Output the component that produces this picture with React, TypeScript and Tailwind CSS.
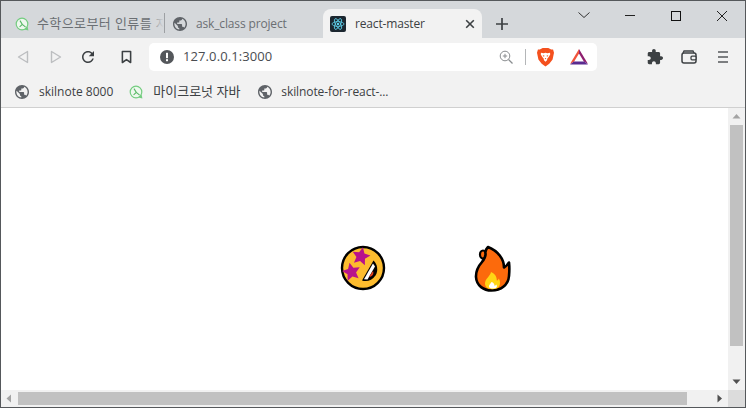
import React from "react";

const Globe = ({ className = "" }: { className?: string }) => (
  <svg viewBox="2 2 20 20" width={14} height={14} className={`shrink-0 ${className}`}>
    <path fill="#5f6368" d="M12 2C6.48 2 2 6.48 2 12s4.48 10 10 10 10-4.48 10-10S17.52 2 12 2zm-1 17.93c-3.95-.49-7-3.85-7-7.93 0-.62.08-1.21.21-1.79L9 15v1c0 1.1.9 2 2 2v1.93zm6.9-2.54c-.26-.81-1-1.39-1.9-1.39h-1v-3c0-.55-.45-1-1-1H8v-2h2c.55 0 1-.45 1-1V7h2c1.1 0 2-.9 2-2v-.41c2.93 1.19 5 4.06 5 7.41 0 2.08-.8 3.97-2.1 5.39z" />
  </svg>
);

const GreenIcon = () => (
  <svg viewBox="0 0 14 14" width={14} height={14} className="shrink-0">
    <circle cx="7" cy="7" r="5.8" fill="#eef8ee" stroke="#74cd80" strokeWidth="1.2" />
    <path d="M5 3.6 L7.3 7.4 L4.6 9.8 M7.3 7.4 L10.6 10.2" fill="none" stroke="#58b866" strokeWidth="1.1" />
    <path d="M9.5 12.6 L13.4 13.4 L12.6 9.6 Z" fill="#74cd80" />
  </svg>
);

const ReactIcon = () => (
  <svg viewBox="0 0 16 16" width={16} height={16} className="shrink-0">
    <rect width="16" height="16" rx="2" fill="#1c2730" />
    <g fill="none" stroke="#5fd4f0" strokeWidth="0.8">
      <ellipse cx="8" cy="8" rx="6" ry="2.4" />
      <ellipse cx="8" cy="8" rx="6" ry="2.4" transform="rotate(60 8 8)" />
      <ellipse cx="8" cy="8" rx="6" ry="2.4" transform="rotate(120 8 8)" />
    </g>
    <circle cx="8" cy="8" r="1.2" fill="#5fd4f0" />
  </svg>
);

const Brave = () => (
  <svg viewBox="0 0 18 20" width={17} height={19} className="shrink-0">
    <path fill="#f4501e" d="M3 1.5 L6 0 H12 L15 1.5 L17 1.5 L18 5 L16.5 12 L13 16.5 L9 19.5 L5 16.5 L1.5 12 L0 5 L1 1.5 Z" />
    <path fill="#fff" d="M4.2 5 L7 5.6 L9 5 L11 5.6 L13.8 5 L14 6.8 L12 10 L11 11 L10.6 13 L9 14.6 L7.4 13 L7 11 L6 10 L4 6.8 Z" />
    <path fill="#f4501e" d="M6 7.4 L8 8.2 L7.2 9.4 Z M12 7.4 L10 8.2 L10.8 9.4 Z M8.2 10.6 H9.8 L9 12 Z" />
  </svg>
);

const Bat = () => (
  <svg viewBox="0 0 18 16" width={18} height={16} className="shrink-0">
    <path fill="#f0543c" d="M9 0 L0 15 L4.2 12.6 L9 4.5 Z" />
    <path fill="#8f1f6f" d="M9 0 L18 15 L13.8 12.6 L9 4.5 Z" />
    <path fill="#5a2b90" d="M0 15.5 H18 L14.2 12.5 H3.8 Z" />
  </svg>
);

const ScrollArrow = ({ d, color }: { d: string; color: string }) => (
  <svg viewBox="0 0 17 17" width={17} height={17} className="shrink-0">
    <path d={d} fill={color} />
  </svg>
);

function star(cx: number, cy: number, R: number, r: number, rot: number) {
  const pts: string[] = [];
  for (let i = 0; i < 10; i++) {
    const a = ((rot + i * 36 - 90) * Math.PI) / 180;
    const q = i % 2 === 0 ? R : r;
    pts.push(`${(cx + q * Math.cos(a)).toFixed(2)},${(cy + q * Math.sin(a)).toFixed(2)}`);
  }
  return pts.join(" ");
}

const Dizzy = () => (
  <svg viewBox="0 0 46 46" width={46} height={46} className="shrink-0">
    <circle cx="23" cy="23" r="21" fill="#fdbc2e" stroke="#000" strokeWidth="2.4" />
    <polygon fill="#b8128c" points={star(21, 11.5, 9.5, 4.6, 12)} />
    <polygon fill="#b8128c" points={star(11.5, 27, 9.5, 4.6, -12)} />
    <path fill="#000" d="M33.5 15.5 C37.5 19 38.5 26 35.5 30.5 C32 35.5 27 37 22 35.5 Z" />
    <path fill="#fff" d="M33 18.5 L24 34.2 L27.5 34.4 L35 21.5 Z" />
    <path fill="#e8401c" d="M33 26 C34 28 33 30.5 31 31.5 L29 32 Z" />
  </svg>
);

const Fire = () => (
  <svg viewBox="0 0 37 47" width={37} height={47} className="shrink-0">
    <ellipse cx="9" cy="9.5" rx="3" ry="4" fill="#fc6a0c" stroke="#000" strokeWidth="2.2" />
    <path
      fill="#fc6a0c"
      stroke="#000"
      strokeWidth="2.6"
      strokeLinejoin="round"
      d="M14 2 C12 4 11 6 11.5 8.5 C11.8 11 11 13.5 8 17 C4 21.5 1.8 26 2 32 C2.5 41 10 45.5 17.5 45.5 C27 45.5 34.5 39.5 35 31 C35.5 26 35.5 22 35 17.5 C33.5 20 32 21.5 30 22.5 C30 14 24 6 14 2 Z"
    />
    <path fill="#ffd514" d="M17 27 C16.5 31 10.5 34 11 39 C11.5 42.5 14 44.2 18.5 44.2 C23.5 44.2 26 41.5 26 38 C26 35.5 25.5 34.5 24.5 33.5 C24.5 35 23.5 35.5 22.8 35.5 C23 32 21 28.5 17 27 Z" />
    <path fill="#fff" d="M17.5 37 C16.5 39 14.5 40 15 42 C16 44 21 44 22.5 42.5 C23.2 41.5 23 40.5 22.2 39.5 C21.8 40.5 21 40.8 20.5 40.8 C20.5 39 19.5 37.5 17.5 37 Z" />
  </svg>
);

export default function App() {
  const latin = "font-['Open_Sans','Noto_Sans_CJK_KR',sans-serif]";
  return (
    <div className={`w-[746px] h-[408px] border border-[#55585b] bg-white flex flex-col overflow-hidden ${latin}`}>
      {/* tab strip */}
      <div className="h-[37px] shrink-0 bg-[#d5d8db] flex items-end pl-[7px]">
        <div className="w-[156px] h-[29px] flex items-center pl-[7px] gap-[8px] overflow-hidden relative">
          <GreenIcon />
          <span className="flex-1 min-w-0 overflow-hidden text-[13px] tracking-[0.4px] text-[#6b6f73] whitespace-nowrap">수학으로부터 인류를 자</span>
          <div className="absolute right-0 top-0 bottom-0 w-[16px] bg-gradient-to-r from-transparent to-[#d5d8db]" />
        </div>
        <div className="w-px h-[20px] mb-[5px] bg-[#9da0a3]" />
        <div className="w-[158px] h-[29px] flex items-center pl-[8px] gap-[9px]">
          <Globe />
          <span className="text-[12px] tracking-[-0.15px] text-[#6b6f73] whitespace-nowrap">ask_class project</span>
        </div>
        <div className="w-[159px] h-[29px] bg-[#f2f2f2] rounded-t-[8px] flex items-center pl-[7px] gap-[9px] relative">
          <ReactIcon />
          <span className="text-[12px] tracking-[-0.15px] text-[#3c4043] whitespace-nowrap flex-1">react-master</span>
          <svg viewBox="0 0 10 10" width={10} height={10} className="mr-[7px] shrink-0">
            <path d="M1.2 1.2 L8.8 8.8 M8.8 1.2 L1.2 8.8" stroke="#3c4043" strokeWidth="1.6" />
          </svg>
        </div>
        <div className="w-[40px] h-[29px] flex items-center justify-center">
          <svg viewBox="0 0 12 12" width={12} height={12}>
            <path d="M6 0 V12 M0 6 H12" stroke="#3c4043" strokeWidth="1.7" />
          </svg>
        </div>
        <div className="ml-auto h-full flex items-start">
          {[
            <path key="a" d="M0.5 1.5 L6 6.5 L11.5 1.5" fill="none" stroke="#333" strokeWidth="1" />,
            <path key="b" d="M1 4.5 H11" stroke="#222" strokeWidth="1" />,
            <rect key="c" x="1.5" y="0.5" width="9" height="9" fill="none" stroke="#111" strokeWidth="1" />,
            <path key="d" d="M1 0 L11 10 M11 0 L1 10" stroke="#222" strokeWidth="1" />,
          ].map((p, i) => (
            <div key={i} className="w-[46px] h-[30px] flex items-center justify-center">
              <svg viewBox="0 0 12 10" width={12} height={10}>{p}</svg>
            </div>
          ))}
        </div>
      </div>

      {/* toolbar */}
      <div className="h-[38px] shrink-0 bg-[#f2f2f2] flex items-center">
        <div className="w-[148px] flex items-center shrink-0 pl-[16px] h-full">
          <svg viewBox="0 0 12 14" width={12} height={14} className="shrink-0">
            <path d="M10.5 1.5 L1.5 7 L10.5 12.5 Z" fill="none" stroke="#bcbec0" strokeWidth="1.4" strokeLinejoin="round" />
          </svg>
          <svg viewBox="0 0 12 14" width={12} height={14} className="ml-[21px] shrink-0">
            <path d="M1.5 1.5 L10.5 7 L1.5 12.5 Z" fill="none" stroke="#bcbec0" strokeWidth="1.4" strokeLinejoin="round" />
          </svg>
          <svg viewBox="0 0 24 24" width={18} height={18} className="ml-[17px] shrink-0">
            <path fill="#3c4043" d="M17.65 6.35C16.2 4.9 14.21 4 12 4c-4.42 0-7.99 3.58-7.99 8s3.57 8 7.99 8c3.73 0 6.84-2.55 7.73-6h-2.08c-.82 2.33-3.04 4-5.65 4-3.31 0-6-2.69-6-6s2.69-6 6-6c1.66 0 3.14.69 4.22 1.78L13 11h7V4l-2.35 2.35z" />
          </svg>
          <svg viewBox="0 0 12 14" width={11} height={14} className="ml-[24px] shrink-0">
            <path d="M1.5 1 H10.5 V13 L6 9.8 L1.5 13 Z" fill="none" stroke="#3c4043" strokeWidth="1.7" strokeLinejoin="round" />
          </svg>
        </div>
        <div className="w-[448px] h-[28px] bg-white rounded-[5px] flex items-center pl-[11px] shrink-0">
          <svg viewBox="0 0 14 14" width={14} height={14} className="shrink-0">
            <circle cx="7" cy="7" r="7" fill="#54575b" />
            <rect x="6" y="2.8" width="2" height="5.4" fill="#fff" />
            <rect x="6" y="9.2" width="2" height="2" fill="#fff" />
          </svg>
          <span className="ml-[9px] text-[13px] tracking-[0.1px] text-[#4a4d51] whitespace-nowrap flex-1">127.0.0.1:3000</span>
          <svg viewBox="0 0 14 14" width={14} height={14} className="shrink-0">
            <circle cx="6" cy="6" r="4.8" fill="none" stroke="#8a8d90" strokeWidth="1" />
            <path d="M9.5 9.5 L13.5 13.5" stroke="#8a8d90" strokeWidth="1.2" />
            <path d="M3.8 6 H8.2 M6 3.8 V8.2" stroke="#8a8d90" strokeWidth="1" />
          </svg>
          <div className="w-px h-[16px] bg-[#b4b6b8] ml-[12px] mr-[11px] shrink-0" />
          <Brave />
          <div className="ml-[16px] mr-[9px] flex">
            <Bat />
          </div>
        </div>
        <div className="flex items-center h-full ml-[50px]">
          <svg viewBox="1 1 22 22" width={16} height={16} className="shrink-0">
            <path fill="#3c4043" d="M20.5 11H19V7c0-1.1-.9-2-2-2h-4V3.5C13 2.12 11.88 1 10.5 1S8 2.12 8 3.5V5H4c-1.1 0-1.99.9-1.99 2v3.8H3.5c1.49 0 2.7 1.21 2.7 2.7s-1.21 2.7-2.7 2.7H2V20c0 1.1.9 2 2 2h3.8v-1.5c0-1.49 1.21-2.7 2.7-2.7 1.49 0 2.7 1.21 2.7 2.7V22H17c1.1 0 2-.9 2-2v-4h1.5c1.38 0 2.5-1.12 2.5-2.5S21.88 11 20.5 11z" />
          </svg>
          <svg viewBox="0 0 16 14" width={16} height={14} className="ml-[18px] shrink-0">
            <path d="M2 3 L3 1 H12 L13 3" fill="none" stroke="#3c4043" strokeWidth="1.3" />
            <rect x="1" y="3" width="14" height="10" rx="2" fill="none" stroke="#3c4043" strokeWidth="1.5" />
            <rect x="10" y="6.2" width="5" height="3.6" rx="1" fill="#f2f2f2" stroke="#3c4043" strokeWidth="1.3" />
          </svg>
          <svg viewBox="0 0 12 14" width={12} height={14} className="ml-[20px] shrink-0">
            <path d="M1 2 H11 M1 7 H11 M1 12 H11" stroke="#55585b" strokeWidth="1.7" />
          </svg>
        </div>
      </div>

      {/* bookmarks */}
      <div className="h-[32px] shrink-0 bg-[#f2f2f2] border-b border-[#d0d0d0] flex items-center pl-[14px] text-[12px] text-[#3c4043]">
        <Globe />
        <span className="ml-[10px] whitespace-nowrap">skilnote 8000</span>
        <div className="ml-[16px] flex"><GreenIcon /></div>
        <span className="ml-[10px] text-[13px] whitespace-nowrap">마이크로넛 자바</span>
        <div className="ml-[18px] flex"><Globe /></div>
        <span className="ml-[9px] whitespace-nowrap tracking-[-0.1px]">skilnote-for-react-...</span>
      </div>

      {/* page */}
      <div className="flex-1 min-h-0 flex">
        <div className="flex-1 min-w-0 flex flex-col">
          <div className="flex-1 min-h-0 flex items-start pl-[339px] pt-[137px]">
            <Dizzy />
            <div className="ml-[88px]"><Fire /></div>
          </div>
          <div className="h-[17px] shrink-0 bg-[#f1f1f1] flex items-center">
            <ScrollArrow d="M10 4.5 L5.5 8.5 L10 12.5 Z" color="#a3a3a3" />
            <div className="w-[669px] h-[13px] bg-[#c1c1c1] shrink-0" />
            <div className="flex-1" />
            <ScrollArrow d="M6.5 4.5 L11 8.5 L6.5 12.5 Z" color="#505050" />
          </div>
        </div>
        <div className="w-[17px] shrink-0 bg-[#f1f1f1] flex flex-col items-center">
          <ScrollArrow d="M4.5 10.5 L8.5 6 L12.5 10.5 Z" color="#a3a3a3" />
          <div className="w-[13px] h-[221px] bg-[#c1c1c1] shrink-0" />
          <div className="flex-1" />
          <ScrollArrow d="M4.5 6.5 L8.5 11 L12.5 6.5 Z" color="#505050" />
          <div className="h-[17px] w-full bg-[#dcdcdc] shrink-0" />
        </div>
      </div>
    </div>
  );
}
